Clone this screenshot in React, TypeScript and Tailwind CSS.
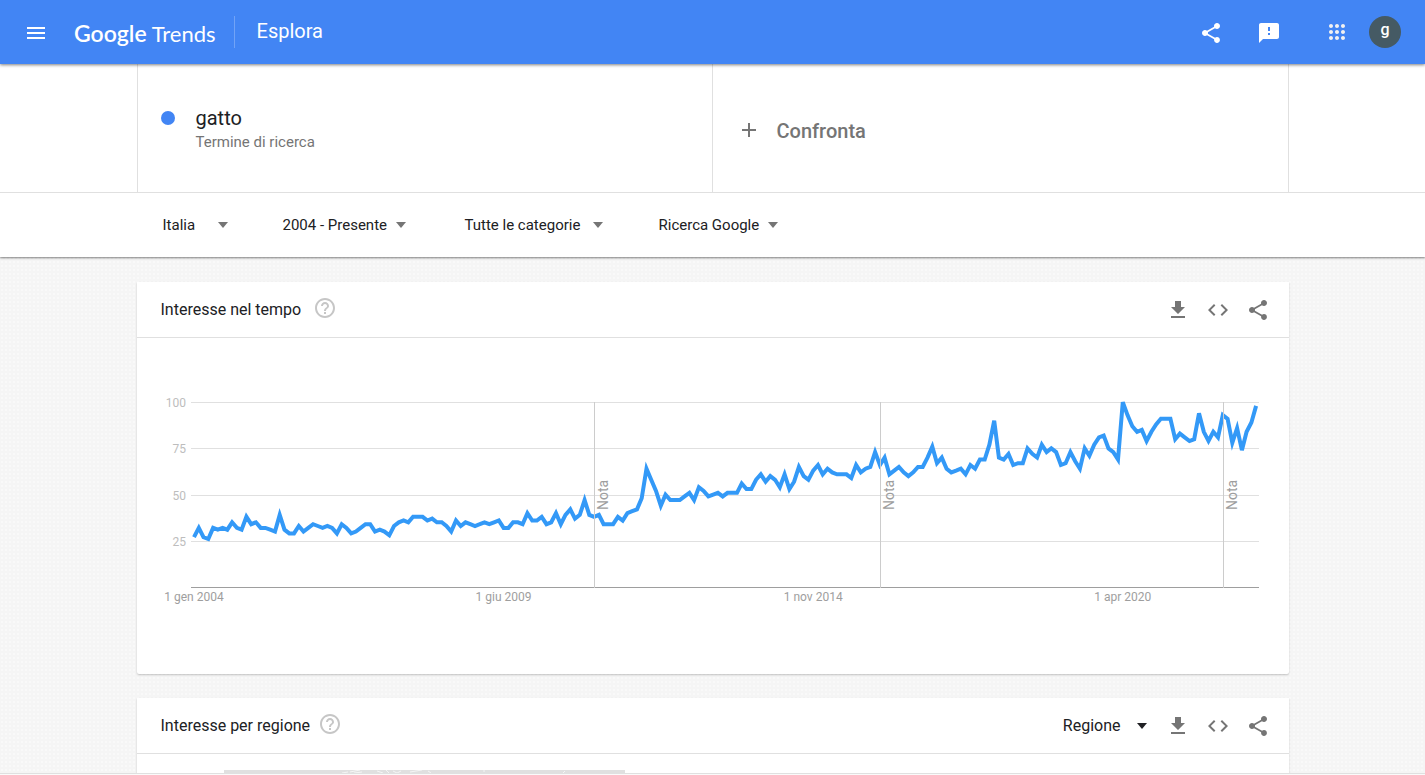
import React from 'react';

interface IconProps {
  d: string;
  className?: string;
}

const ICONS = {
  menu: 'M3 18h18v-2H3v2zm0-5h18v-2H3v2zm0-7v2h18V6H3z',
  share:
    'M18 16.08c-.76 0-1.44.3-1.96.77L8.91 12.7c.05-.23.09-.46.09-.7s-.04-.47-.09-.7l7.05-4.11c.54.5 1.25.81 2.04.81 1.66 0 3-1.34 3-3s-1.34-3-3-3-3 1.34-3 3c0 .24.04.47.09.7L8.04 9.81C7.5 9.31 6.79 9 6 9c-1.66 0-3 1.34-3 3s1.34 3 3 3c.79 0 1.5-.31 2.04-.81l7.12 4.16c-.05.21-.08.43-.08.65 0 1.61 1.31 2.92 2.92 2.92s2.92-1.31 2.92-2.92-1.31-2.92-2.92-2.92z',
  feedback:
    'M20 2H4c-1.1 0-1.99.9-1.99 2L2 22l4-4h14c1.1 0 2-.9 2-2V4c0-1.1-.9-2-2-2zm-7 12h-2v-2h2v2zm0-4h-2V6h2v4z',
  apps:
    'M6 8c1.1 0 2-.9 2-2s-.9-2-2-2-2 .9-2 2 .9 2 2 2zm6 12c1.1 0 2-.9 2-2s-.9-2-2-2-2 .9-2 2 .9 2 2 2zm-6 0c1.1 0 2-.9 2-2s-.9-2-2-2-2 .9-2 2 .9 2 2 2zm0-6c1.1 0 2-.9 2-2s-.9-2-2-2-2 .9-2 2 .9 2 2 2zm6 0c1.1 0 2-.9 2-2s-.9-2-2-2-2 .9-2 2 .9 2 2 2zm4-8c0 1.1.9 2 2 2s2-.9 2-2-.9-2-2-2-2 .9-2 2zm-4 2c1.1 0 2-.9 2-2s-.9-2-2-2-2 .9-2 2 .9 2 2 2zm6 6c1.1 0 2-.9 2-2s-.9-2-2-2-2 .9-2 2 .9 2 2 2zm0 6c1.1 0 2-.9 2-2s-.9-2-2-2-2 .9-2 2 .9 2 2 2z',
  add: 'M19 13h-6v6h-2v-6H5v-2h6V5h2v6h6v2z',
  download: 'M19 9h-4V3H9v6H5l7 7 7-7zM5 18v2h14v-2H5z',
  code: 'M9.4 16.6L4.8 12l4.6-4.6L8 6l-6 6 6 6 1.4-1.4zm5.2 0l4.6-4.6-4.6-4.6L16 6l6 6-6 6-1.4-1.4z',
  help:
    'M11 18h2v-2h-2v2zm1-16C6.48 2 2 6.48 2 12s4.48 10 10 10 10-4.48 10-10S17.52 2 12 2zm0 18c-4.41 0-8-3.59-8-8s3.59-8 8-8 8 3.59 8 8-3.59 8-8 8zm0-14c-2.21 0-4 1.79-4 4h2c0-1.1.9-2 2-2s2 .9 2 2c0 2-3 1.75-3 5h2c0-2.25 3-2.5 3-5 0-2.21-1.79-4-4-4z',
};

const Icon: React.FC<IconProps> = ({ d, className = '' }) => (
  <svg viewBox="0 0 24 24" aria-hidden="true" className={`size-6 shrink-0 fill-current ${className}`}>
    <path d={d} />
  </svg>
);

const Caret: React.FC<{ className?: string }> = ({ className = '' }) => (
  <svg viewBox="0 0 10 6" aria-hidden="true" className={`h-[6px] w-[10px] shrink-0 fill-current ${className}`}>
    <path d="M0 0h10L5 6z" />
  </svg>
);

// Monthly interest, January 2004 - August 2022
const INTEREST = [
  27, 32, 27, 26, 32, 31, 32, 31, 35, 32, 31, 38,
  34, 35, 32, 32, 31, 30, 39, 31, 29, 29, 33, 30,
  32, 34, 33, 32, 33, 32, 29, 34, 32, 29, 30, 32,
  34, 34, 30, 31, 30, 28, 33, 35, 36, 35, 38, 38,
  38, 36, 37, 35, 35, 33, 30, 36, 33, 35, 34, 33,
  34, 35, 34, 35, 36, 32, 32, 35, 35, 34, 40, 36,
  36, 38, 34, 35, 40, 34, 39, 42, 37, 39, 47, 39,
  38, 39, 34, 34, 34, 38, 36, 40, 41, 42, 48, 64,
  58, 52, 44, 50, 47, 47, 47, 49, 51, 47, 54, 52,
  49, 50, 51, 49, 51, 51, 51, 56, 53, 53, 58, 61,
  57, 60, 58, 54, 61, 53, 57, 65, 60, 58, 63, 66,
  61, 64, 62, 61, 61, 61, 59, 66, 62, 64, 65, 73,
  66, 70, 61, 63, 65, 62, 60, 62, 65, 65, 70, 76,
  67, 70, 64, 62, 63, 64, 61, 66, 64, 69, 69, 77,
  90, 70, 69, 72, 66, 67, 67, 75, 72, 70, 77, 73,
  75, 73, 66, 67, 73, 68, 64, 75, 71, 77, 81, 82,
  75, 73, 69, 100, 93, 87, 84, 85, 79, 84, 88, 91,
  91, 91, 80, 83, 81, 79, 80, 94, 84, 79, 84, 81,
  93, 91, 78, 86, 74, 84, 89, 98,
];

const GRID = [
  { value: 100, y: 10 },
  { value: 75, y: 56 },
  { value: 50, y: 103 },
  { value: 25, y: 149 },
];

const DATES = [
  { label: '1 gen 2004', month: 0 },
  { label: '1 giu 2009', month: 65 },
  { label: '1 nov 2014', month: 130 },
  { label: '1 apr 2020', month: 195 },
];

const NOTES = [84, 144, 216];

const BASELINE = 195;
const getX = (month: number) => 33 + month * 4.763;
const getY = (value: number) => BASELINE - value * 1.848;

const InterestChart: React.FC = () => {
  const points = INTEREST.map((value, month) => `${getX(month).toFixed(1)},${getY(value).toFixed(1)}`).join(' ');

  return (
    <svg viewBox="0 0 1104 220" role="img" aria-label="Interesse nel tempo" className="w-full">
      {GRID.map(({ value, y }) => (
        <g key={value}>
          <rect x="30" y={y} width="1068" height="1" fill="#e0e0e0" />
          <text x="25" y={y + 5} textAnchor="end" fontSize="12" fill="#bdbdbd">
            {value}
          </text>
        </g>
      ))}
      <rect x="30" y={BASELINE} width="1068" height="1" fill="#9e9e9e" />
      <polyline points={points} fill="none" stroke="#3399f7" strokeWidth="4" strokeMiterlimit="4" />
      {NOTES.map(month => (
        <g key={month}>
          <rect x={Math.round(getX(month))} y="10" width="1" height="186" fill="#cccccc" />
          <text
            transform={`translate(${Math.round(getX(month)) + 14} 118) rotate(-90)`}
            fontSize="14"
            fill="#9e9e9e"
          >
            Nota
          </text>
        </g>
      ))}
      {DATES.map(({ label, month }) => (
        <text key={label} x={getX(month)} y="209" textAnchor="middle" fontSize="12" fill="#9e9e9e">
          {label}
        </text>
      ))}
    </svg>
  );
};

interface CardProps {
  title: string;
  helpGap: string;
  actions?: React.ReactNode;
  children: React.ReactNode;
}

const Card: React.FC<CardProps> = ({ title, helpGap, actions, children }) => (
  <section className="rounded-b-xs bg-white shadow-[0_1px_2px_rgba(0,0,0,0.22)]">
    <header className="flex h-14 items-center border-b border-[#e0e0e0] pr-[19px] pl-6">
      <h2 className="text-base text-[#202124]">{title}</h2>
      <button type="button" aria-label="Guida" className={`pb-1 text-[#c6c6c6] ${helpGap}`}>
        <Icon d={ICONS.help} />
      </button>
      <div className="ml-auto flex items-center gap-4 text-[#757575]">
        {actions}
        <button type="button" aria-label="Scarica">
          <Icon d={ICONS.download} />
        </button>
        <button type="button" aria-label="Incorpora">
          <Icon d={ICONS.code} />
        </button>
        <button type="button" aria-label="Condividi">
          <Icon d={ICONS.share} />
        </button>
      </div>
    </header>
    {children}
  </section>
);

const FILTERS = [
  { label: 'Italia', width: 'w-[65px]', spacing: 'mr-[55px]' },
  { label: '2004 - Presente', width: 'w-[123px]', spacing: 'mr-[59px]' },
  { label: 'Tutte le categorie', width: 'w-[138px]', spacing: 'mr-14' },
  { label: 'Ricerca Google', width: 'w-[119px]', spacing: '' },
];

const App: React.FC = () => {
  return (
    <div className="flex h-screen flex-col overflow-hidden bg-[#f5f5f5] bg-[radial-gradient(#f9f9f9_1px,transparent_1px)] bg-size-[4px_4px] font-['Roboto',sans-serif]">
      {/* Top bar */}
      <header className="z-10 flex h-16 shrink-0 items-center bg-[#4285f4] px-6 text-white shadow-[0_1px_3px_rgba(0,0,0,0.5)]">
        <button type="button" aria-label="Menu" className="pt-[2px]">
          <Icon d={ICONS.menu} />
        </button>
        <a href="#" className="ml-[26px] flex items-baseline gap-[5px] pt-[2px] font-['Lato',sans-serif]">
          <span className="text-[23px] font-semibold">Google</span>
          <span className="text-[22px]">Trends</span>
        </a>
        <div className="ml-[18px] h-8 w-px bg-white/25" />
        <h1 className="ml-[22px] pb-[2px] text-xl">Esplora</h1>
        <div className="ml-auto flex items-center">
          <button type="button" aria-label="Condividi" className="pt-[2px]">
            <Icon d={ICONS.share} />
          </button>
          <button type="button" aria-label="Invia feedback" className="ml-[34px] pt-[2px]">
            <Icon d={ICONS.feedback} />
          </button>
          <button type="button" aria-label="App Google" className="ml-11">
            <Icon d={ICONS.apps} className="text-[#f1f1f1]" />
          </button>
          <button type="button" className="ml-5 size-8 rounded-full bg-[#455a64] pb-1 text-base leading-7 font-medium">
            g
          </button>
        </div>
      </header>

      {/* Search terms and filters */}
      <div className="shrink-0 bg-white shadow-[0_1px_2px_rgba(0,0,0,0.5)]">
        <div className="border-b border-[#e0e0e0]">
          <div className="mx-auto grid h-32 max-w-6xl grid-cols-2 border-x border-[#e0e0e0]">
            <div className="flex items-start border-r border-[#e0e0e0] px-[23px] pt-10">
              <span className="mt-[7px] size-[14px] rounded-full bg-[#4285f4]" />
              <div className="ml-[21px]">
                <p className="text-xl leading-7 text-[#202124]">gatto</p>
                <p className="text-[15px] leading-5 text-[#757575]">Termine di ricerca</p>
              </div>
            </div>
            <button type="button" className="flex items-center pt-1 pl-6 text-[#757575]">
              <Icon d={ICONS.add} />
              <span className="ml-4 pt-[2px] text-xl font-medium">Confronta</span>
            </button>
          </div>
        </div>
        <nav className="mx-auto flex h-16 max-w-6xl items-center pl-[26px]">
          {FILTERS.map(({ label, width, spacing }) => (
            <button
              key={label}
              type="button"
              className={`flex items-center justify-between text-[15px] text-[#202124] ${width} ${spacing}`}
            >
              {label}
              <Caret className="text-[#757575]" />
            </button>
          ))}
        </nav>
      </div>

      <main className="min-h-0 flex-1 overflow-hidden">
        <div className="mx-auto flex max-w-6xl flex-col gap-6 pt-[25px]">
          <Card title="Interesse nel tempo" helpGap="ml-3">
            <div className="px-6 pt-[54px] pb-[62px]">
              <InterestChart />
            </div>
          </Card>
          <Card
            title="Interesse per regione"
            helpGap="ml-2"
            actions={
              <button type="button" className="mr-[3px] flex items-center gap-4 text-base text-[#202124]">
                Regione
                <Caret />
              </button>
            }
          >
            <div className="h-64 pt-4 pl-[87px]">
              <svg viewBox="0 0 401 200" aria-hidden="true" className="w-[401px]">
                <rect width="401" height="200" fill="#e0e0e0" />
                <path
                  d="M118 3l6-1M126 2l10-2M130 3l8-1M153 1l6 2M162 0l3 3M169 1l4 2 4-2M186 2l12-2M204 1l3 2M260 0v2M341 1l-2 2"
                  fill="none"
                  stroke="#f5f5f5"
                />
              </svg>
            </div>
          </Card>
        </div>
      </main>
      <footer className="h-[2px] shrink-0 border-t border-[#e0e0e0] bg-[#fafafa]" />
    </div>
  );
};

export default App;
